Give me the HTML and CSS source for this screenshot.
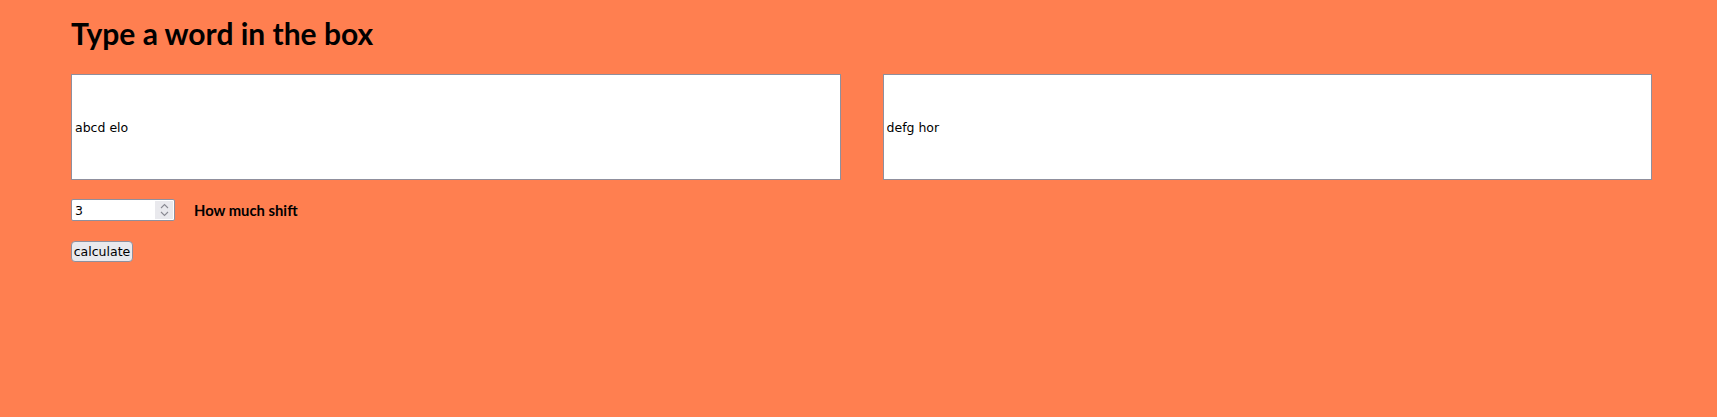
FILE: index.html
```html
<!DOCTYPE html>
<html>
<head>
<meta charset="utf-8">
<link rel="stylesheet" href="styles.css">
</head>
<body>
<div class="page">
  <h1 class="title">Type a word in the box</h1>
  <div class="boxes">
    <input class="word" type="text" value="abcd elo">
    <input class="word" type="text" value="defg hor">
  </div>
  <div class="shift-row">
    <div class="number">
      <span class="num-val">3</span>
      <span class="spin">
        <svg width="9" height="14" viewBox="0 0 9 14"><path d="M1 5 L4.5 1.5 L8 5" fill="none" stroke="#8a8a92" stroke-width="1.1"/><path d="M1 9 L4.5 12.5 L8 9" fill="none" stroke="#8a8a92" stroke-width="1.1"/></svg>
      </span>
    </div>
    <label class="shift-label">How much shift</label>
  </div>
  <div class="btn-row">
    <button class="calc">calculate</button>
  </div>
</div>
</body>
</html>
```

FILE: styles.css
```css
html, body {
  margin: 0;
  padding: 0;
  background: #ff7f50;
  height: 100%;
}
body {
  font-family: "Lato", "Open Sans", sans-serif;
}
.page {
  padding: 0 65px 0 71px;
}
.title {
  margin: 0;
  padding-top: 15px;
  font-family: "Lato", sans-serif;
  font-size: 30px;
  font-weight: 700;
  line-height: 36px;
  color: #000;
}
.boxes {
  display: flex;
  gap: 42px;
  margin-top: 23px;
}
.word {
  flex: 1;
  min-width: 0;
  height: 106px;
  box-sizing: border-box;
  border: 1px solid #8f8f9d;
  border-radius: 0;
  background: #fff;
  padding: 1px 3px 0;
  font-family: "DejaVu Sans", sans-serif;
  font-size: 12.5px;
  color: #000;
  outline: none;
}
.shift-row {
  display: flex;
  align-items: center;
  gap: 19px;
  margin-top: 19px;
}
.number {
  width: 104px;
  height: 22px;
  box-sizing: border-box;
  border: 1px solid #8f8f9d;
  border-radius: 2px;
  background: #fff;
  display: flex;
  align-items: center;
  justify-content: space-between;
  padding: 0 1px 0 3px;
}
.num-val {
  font-family: "DejaVu Sans", sans-serif;
  font-size: 12.5px;
}
.spin {
  width: 18px;
  height: 18px;
  background: #e9e9ed;
  display: flex;
  align-items: center;
  justify-content: center;
}
.shift-label {
  font-family: "Lato", sans-serif;
  font-weight: 700;
  font-size: 14.8px;
  color: #000;
}
.btn-row {
  margin-top: 19px;
}
.calc {
  height: 21px;
  width: 62px;
  box-sizing: border-box;
  padding: 0;
  border: 1px solid #8f8f9d;
  border-radius: 4px;
  background: #e9e9ed;
  font-family: "DejaVu Sans", sans-serif;
  font-size: 12.5px;
  color: #000;
}
```
